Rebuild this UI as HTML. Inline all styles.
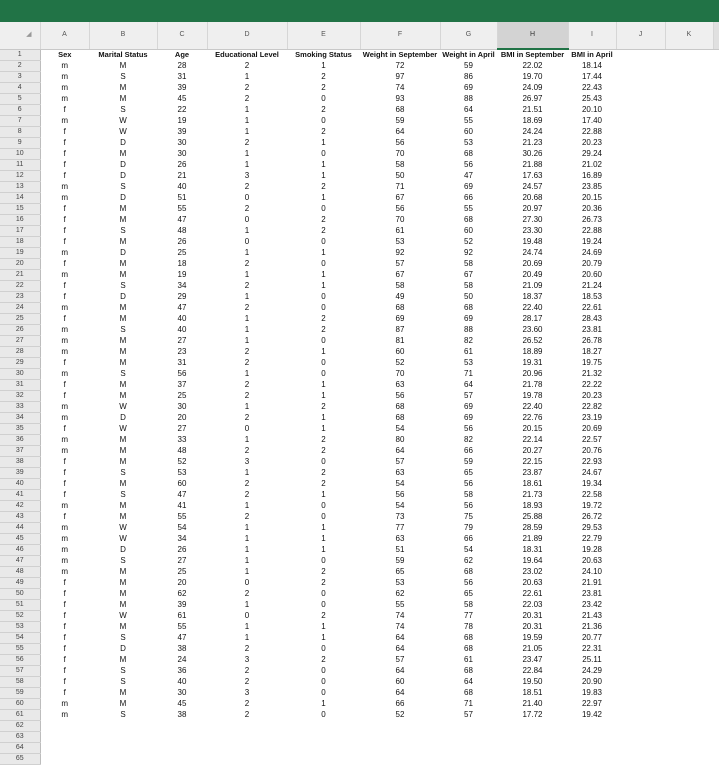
<!DOCTYPE html>
<html><head><meta charset="utf-8"><style>
*{margin:0;padding:0;box-sizing:border-box}
body{width:719px;height:764px;overflow:hidden;background:#fff;font-family:"Liberation Sans",sans-serif}
.bar{height:22px;background:#217346}
table{border-collapse:collapse;table-layout:fixed;position:absolute;top:22px;left:0}
td,th{height:11px;font-size:8px;line-height:10px;text-align:center;white-space:nowrap;overflow:visible;padding:0;font-weight:normal;color:#111}
thead th{height:27px;background:#efefef;color:#555;font-size:7px;border-right:1px solid #d6d6d6;border-bottom:1px solid #c8c8c8}
thead th.sel{background:#d3d3d3;border-bottom:2px solid #217346;color:#333}
thead th.end{background:#e0e0e0;border-right:none}
thead th.corner{color:#999;font-size:7px;text-align:right;padding-right:8px;vertical-align:middle}
tbody th{background:#e9e9e9;color:#444;border-right:1px solid #bdbdbd;border-bottom:1px solid #d0d0d0;font-size:7px}
tr.h td{font-weight:bold;font-size:7.5px}
</style></head><body>
<div class="bar"></div>
<table>
<colgroup><col style="width:40px"><col style="width:49px"><col style="width:68px"><col style="width:50px"><col style="width:80px"><col style="width:73px"><col style="width:80px"><col style="width:57px"><col style="width:71px"><col style="width:48px"><col style="width:49px"><col style="width:48px"><col style="width:6px"></colgroup>
<thead><tr><th class="corner">◢</th><th>A</th><th>B</th><th>C</th><th>D</th><th>E</th><th>F</th><th>G</th><th class="sel">H</th><th>I</th><th>J</th><th>K</th><th class="end"></th></tr></thead>
<tbody>
<tr class="h"><th>1</th><td>Sex</td><td>Marital Status</td><td>Age</td><td>Educational Level</td><td>Smoking Status</td><td>Weight in September</td><td>Weight in April</td><td>BMI in September</td><td>BMI in April</td><td></td><td></td><td></td></tr>
<tr><th>2</th><td>m</td><td>M</td><td>28</td><td>2</td><td>1</td><td>72</td><td>59</td><td>22.02</td><td>18.14</td><td></td><td></td><td></td></tr>
<tr><th>3</th><td>m</td><td>S</td><td>31</td><td>1</td><td>2</td><td>97</td><td>86</td><td>19.70</td><td>17.44</td><td></td><td></td><td></td></tr>
<tr><th>4</th><td>m</td><td>M</td><td>39</td><td>2</td><td>2</td><td>74</td><td>69</td><td>24.09</td><td>22.43</td><td></td><td></td><td></td></tr>
<tr><th>5</th><td>m</td><td>M</td><td>45</td><td>2</td><td>0</td><td>93</td><td>88</td><td>26.97</td><td>25.43</td><td></td><td></td><td></td></tr>
<tr><th>6</th><td>f</td><td>S</td><td>22</td><td>1</td><td>2</td><td>68</td><td>64</td><td>21.51</td><td>20.10</td><td></td><td></td><td></td></tr>
<tr><th>7</th><td>m</td><td>W</td><td>19</td><td>1</td><td>0</td><td>59</td><td>55</td><td>18.69</td><td>17.40</td><td></td><td></td><td></td></tr>
<tr><th>8</th><td>f</td><td>W</td><td>39</td><td>1</td><td>2</td><td>64</td><td>60</td><td>24.24</td><td>22.88</td><td></td><td></td><td></td></tr>
<tr><th>9</th><td>f</td><td>D</td><td>30</td><td>2</td><td>1</td><td>56</td><td>53</td><td>21.23</td><td>20.23</td><td></td><td></td><td></td></tr>
<tr><th>10</th><td>f</td><td>M</td><td>30</td><td>1</td><td>0</td><td>70</td><td>68</td><td>30.26</td><td>29.24</td><td></td><td></td><td></td></tr>
<tr><th>11</th><td>f</td><td>D</td><td>26</td><td>1</td><td>1</td><td>58</td><td>56</td><td>21.88</td><td>21.02</td><td></td><td></td><td></td></tr>
<tr><th>12</th><td>f</td><td>D</td><td>21</td><td>3</td><td>1</td><td>50</td><td>47</td><td>17.63</td><td>16.89</td><td></td><td></td><td></td></tr>
<tr><th>13</th><td>m</td><td>S</td><td>40</td><td>2</td><td>2</td><td>71</td><td>69</td><td>24.57</td><td>23.85</td><td></td><td></td><td></td></tr>
<tr><th>14</th><td>m</td><td>D</td><td>51</td><td>0</td><td>1</td><td>67</td><td>66</td><td>20.68</td><td>20.15</td><td></td><td></td><td></td></tr>
<tr><th>15</th><td>f</td><td>M</td><td>55</td><td>2</td><td>0</td><td>56</td><td>55</td><td>20.97</td><td>20.36</td><td></td><td></td><td></td></tr>
<tr><th>16</th><td>f</td><td>M</td><td>47</td><td>0</td><td>2</td><td>70</td><td>68</td><td>27.30</td><td>26.73</td><td></td><td></td><td></td></tr>
<tr><th>17</th><td>f</td><td>S</td><td>48</td><td>1</td><td>2</td><td>61</td><td>60</td><td>23.30</td><td>22.88</td><td></td><td></td><td></td></tr>
<tr><th>18</th><td>f</td><td>M</td><td>26</td><td>0</td><td>0</td><td>53</td><td>52</td><td>19.48</td><td>19.24</td><td></td><td></td><td></td></tr>
<tr><th>19</th><td>m</td><td>D</td><td>25</td><td>1</td><td>1</td><td>92</td><td>92</td><td>24.74</td><td>24.69</td><td></td><td></td><td></td></tr>
<tr><th>20</th><td>f</td><td>M</td><td>18</td><td>2</td><td>0</td><td>57</td><td>58</td><td>20.69</td><td>20.79</td><td></td><td></td><td></td></tr>
<tr><th>21</th><td>m</td><td>M</td><td>19</td><td>1</td><td>1</td><td>67</td><td>67</td><td>20.49</td><td>20.60</td><td></td><td></td><td></td></tr>
<tr><th>22</th><td>f</td><td>S</td><td>34</td><td>2</td><td>1</td><td>58</td><td>58</td><td>21.09</td><td>21.24</td><td></td><td></td><td></td></tr>
<tr><th>23</th><td>f</td><td>D</td><td>29</td><td>1</td><td>0</td><td>49</td><td>50</td><td>18.37</td><td>18.53</td><td></td><td></td><td></td></tr>
<tr><th>24</th><td>m</td><td>M</td><td>47</td><td>2</td><td>0</td><td>68</td><td>68</td><td>22.40</td><td>22.61</td><td></td><td></td><td></td></tr>
<tr><th>25</th><td>f</td><td>M</td><td>40</td><td>1</td><td>2</td><td>69</td><td>69</td><td>28.17</td><td>28.43</td><td></td><td></td><td></td></tr>
<tr><th>26</th><td>m</td><td>S</td><td>40</td><td>1</td><td>2</td><td>87</td><td>88</td><td>23.60</td><td>23.81</td><td></td><td></td><td></td></tr>
<tr><th>27</th><td>m</td><td>M</td><td>27</td><td>1</td><td>0</td><td>81</td><td>82</td><td>26.52</td><td>26.78</td><td></td><td></td><td></td></tr>
<tr><th>28</th><td>m</td><td>M</td><td>23</td><td>2</td><td>1</td><td>60</td><td>61</td><td>18.89</td><td>18.27</td><td></td><td></td><td></td></tr>
<tr><th>29</th><td>f</td><td>M</td><td>31</td><td>2</td><td>0</td><td>52</td><td>53</td><td>19.31</td><td>19.75</td><td></td><td></td><td></td></tr>
<tr><th>30</th><td>m</td><td>S</td><td>56</td><td>1</td><td>0</td><td>70</td><td>71</td><td>20.96</td><td>21.32</td><td></td><td></td><td></td></tr>
<tr><th>31</th><td>f</td><td>M</td><td>37</td><td>2</td><td>1</td><td>63</td><td>64</td><td>21.78</td><td>22.22</td><td></td><td></td><td></td></tr>
<tr><th>32</th><td>f</td><td>M</td><td>25</td><td>2</td><td>1</td><td>56</td><td>57</td><td>19.78</td><td>20.23</td><td></td><td></td><td></td></tr>
<tr><th>33</th><td>m</td><td>W</td><td>30</td><td>1</td><td>2</td><td>68</td><td>69</td><td>22.40</td><td>22.82</td><td></td><td></td><td></td></tr>
<tr><th>34</th><td>m</td><td>D</td><td>20</td><td>2</td><td>1</td><td>68</td><td>69</td><td>22.76</td><td>23.19</td><td></td><td></td><td></td></tr>
<tr><th>35</th><td>f</td><td>W</td><td>27</td><td>0</td><td>1</td><td>54</td><td>56</td><td>20.15</td><td>20.69</td><td></td><td></td><td></td></tr>
<tr><th>36</th><td>m</td><td>M</td><td>33</td><td>1</td><td>2</td><td>80</td><td>82</td><td>22.14</td><td>22.57</td><td></td><td></td><td></td></tr>
<tr><th>37</th><td>m</td><td>M</td><td>48</td><td>2</td><td>2</td><td>64</td><td>66</td><td>20.27</td><td>20.76</td><td></td><td></td><td></td></tr>
<tr><th>38</th><td>f</td><td>M</td><td>52</td><td>3</td><td>0</td><td>57</td><td>59</td><td>22.15</td><td>22.93</td><td></td><td></td><td></td></tr>
<tr><th>39</th><td>f</td><td>S</td><td>53</td><td>1</td><td>2</td><td>63</td><td>65</td><td>23.87</td><td>24.67</td><td></td><td></td><td></td></tr>
<tr><th>40</th><td>f</td><td>M</td><td>60</td><td>2</td><td>2</td><td>54</td><td>56</td><td>18.61</td><td>19.34</td><td></td><td></td><td></td></tr>
<tr><th>41</th><td>f</td><td>S</td><td>47</td><td>2</td><td>1</td><td>56</td><td>58</td><td>21.73</td><td>22.58</td><td></td><td></td><td></td></tr>
<tr><th>42</th><td>m</td><td>M</td><td>41</td><td>1</td><td>0</td><td>54</td><td>56</td><td>18.93</td><td>19.72</td><td></td><td></td><td></td></tr>
<tr><th>43</th><td>f</td><td>M</td><td>55</td><td>2</td><td>0</td><td>73</td><td>75</td><td>25.88</td><td>26.72</td><td></td><td></td><td></td></tr>
<tr><th>44</th><td>m</td><td>W</td><td>54</td><td>1</td><td>1</td><td>77</td><td>79</td><td>28.59</td><td>29.53</td><td></td><td></td><td></td></tr>
<tr><th>45</th><td>m</td><td>W</td><td>34</td><td>1</td><td>1</td><td>63</td><td>66</td><td>21.89</td><td>22.79</td><td></td><td></td><td></td></tr>
<tr><th>46</th><td>m</td><td>D</td><td>26</td><td>1</td><td>1</td><td>51</td><td>54</td><td>18.31</td><td>19.28</td><td></td><td></td><td></td></tr>
<tr><th>47</th><td>m</td><td>S</td><td>27</td><td>1</td><td>0</td><td>59</td><td>62</td><td>19.64</td><td>20.63</td><td></td><td></td><td></td></tr>
<tr><th>48</th><td>m</td><td>M</td><td>25</td><td>1</td><td>2</td><td>65</td><td>68</td><td>23.02</td><td>24.10</td><td></td><td></td><td></td></tr>
<tr><th>49</th><td>f</td><td>M</td><td>20</td><td>0</td><td>2</td><td>53</td><td>56</td><td>20.63</td><td>21.91</td><td></td><td></td><td></td></tr>
<tr><th>50</th><td>f</td><td>M</td><td>62</td><td>2</td><td>0</td><td>62</td><td>65</td><td>22.61</td><td>23.81</td><td></td><td></td><td></td></tr>
<tr><th>51</th><td>f</td><td>M</td><td>39</td><td>1</td><td>0</td><td>55</td><td>58</td><td>22.03</td><td>23.42</td><td></td><td></td><td></td></tr>
<tr><th>52</th><td>f</td><td>W</td><td>61</td><td>0</td><td>2</td><td>74</td><td>77</td><td>20.31</td><td>21.43</td><td></td><td></td><td></td></tr>
<tr><th>53</th><td>f</td><td>M</td><td>55</td><td>1</td><td>1</td><td>74</td><td>78</td><td>20.31</td><td>21.36</td><td></td><td></td><td></td></tr>
<tr><th>54</th><td>f</td><td>S</td><td>47</td><td>1</td><td>1</td><td>64</td><td>68</td><td>19.59</td><td>20.77</td><td></td><td></td><td></td></tr>
<tr><th>55</th><td>f</td><td>D</td><td>38</td><td>2</td><td>0</td><td>64</td><td>68</td><td>21.05</td><td>22.31</td><td></td><td></td><td></td></tr>
<tr><th>56</th><td>f</td><td>M</td><td>24</td><td>3</td><td>2</td><td>57</td><td>61</td><td>23.47</td><td>25.11</td><td></td><td></td><td></td></tr>
<tr><th>57</th><td>f</td><td>S</td><td>36</td><td>2</td><td>0</td><td>64</td><td>68</td><td>22.84</td><td>24.29</td><td></td><td></td><td></td></tr>
<tr><th>58</th><td>f</td><td>S</td><td>40</td><td>2</td><td>0</td><td>60</td><td>64</td><td>19.50</td><td>20.90</td><td></td><td></td><td></td></tr>
<tr><th>59</th><td>f</td><td>M</td><td>30</td><td>3</td><td>0</td><td>64</td><td>68</td><td>18.51</td><td>19.83</td><td></td><td></td><td></td></tr>
<tr><th>60</th><td>m</td><td>M</td><td>45</td><td>2</td><td>1</td><td>66</td><td>71</td><td>21.40</td><td>22.97</td><td></td><td></td><td></td></tr>
<tr><th>61</th><td>m</td><td>S</td><td>38</td><td>2</td><td>0</td><td>52</td><td>57</td><td>17.72</td><td>19.42</td><td></td><td></td><td></td></tr>
<tr><th>62</th><td></td><td></td><td></td><td></td><td></td><td></td><td></td><td></td><td></td><td></td><td></td><td></td></tr>
<tr><th>63</th><td></td><td></td><td></td><td></td><td></td><td></td><td></td><td></td><td></td><td></td><td></td><td></td></tr>
<tr><th>64</th><td></td><td></td><td></td><td></td><td></td><td></td><td></td><td></td><td></td><td></td><td></td><td></td></tr>
<tr><th>65</th><td></td><td></td><td></td><td></td><td></td><td></td><td></td><td></td><td></td><td></td><td></td><td></td></tr>
</tbody></table>
</body></html>
